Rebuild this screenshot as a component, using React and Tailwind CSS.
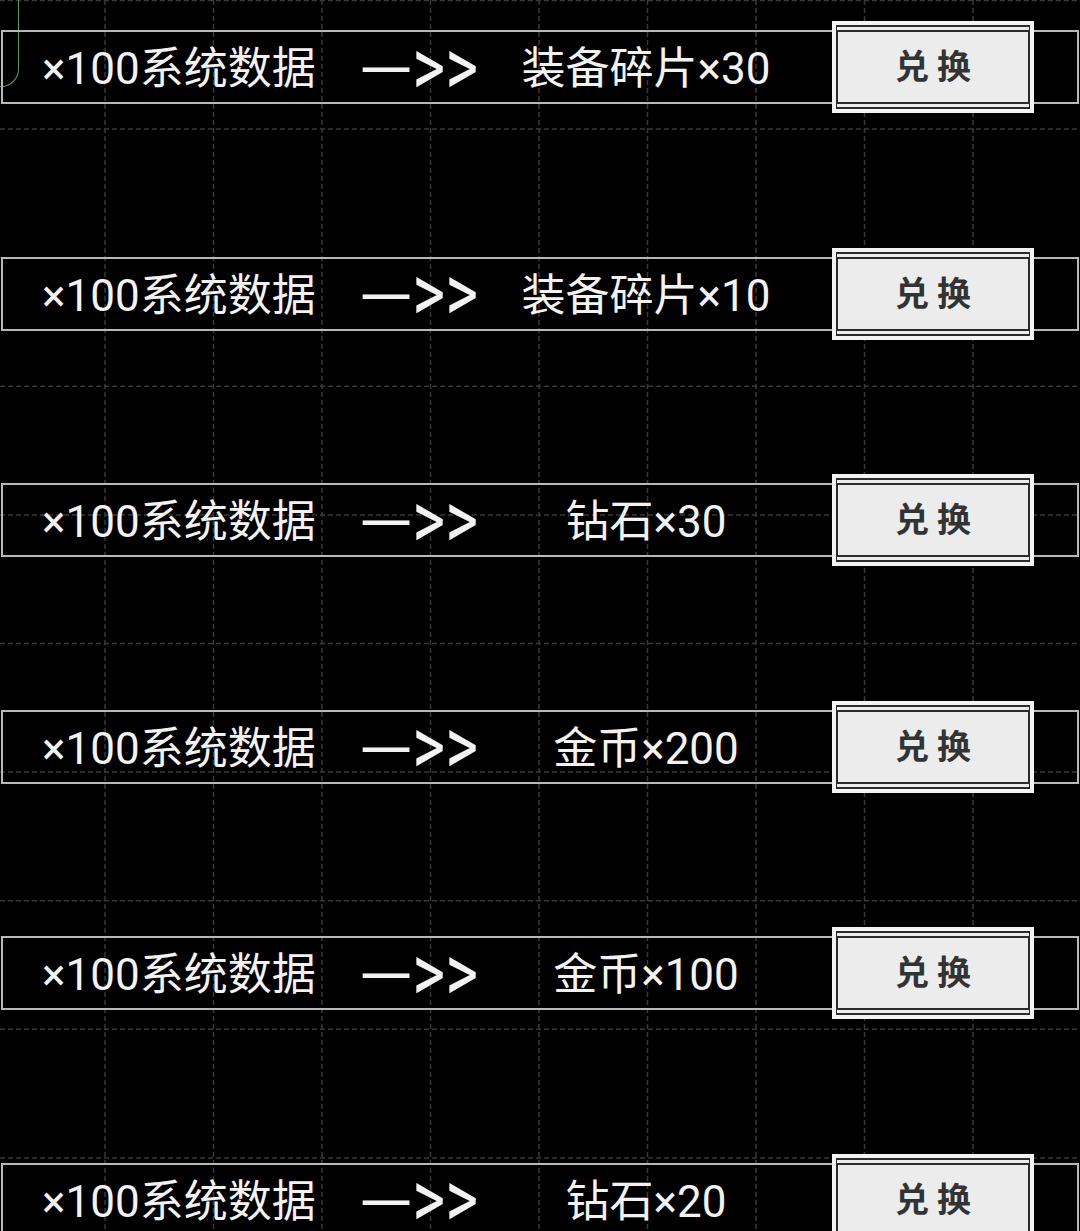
import React from "react";

const trades = [
  { cost: "×100系统数据", reward: "装备碎片×30" },
  { cost: "×100系统数据", reward: "装备碎片×10" },
  { cost: "×100系统数据", reward: "钻石×30" },
  { cost: "×100系统数据", reward: "金币×200" },
  { cost: "×100系统数据", reward: "金币×100" },
  { cost: "×100系统数据", reward: "钻石×20" },
];

const FONT = { fontFamily: 'Roboto, "Noto Sans CJK SC", sans-serif' };
const CJK = { fontFamily: '"Noto Sans CJK SC", sans-serif' };

// dashed backdrop grid
const GridBackdrop = () => {
  const cols = Array.from({ length: 10 }, (_, i) => -3.5 + 108.5 * (i + 1));
  const rows = Array.from({ length: 10 }, (_, i) => 128.6 * i + 0.5);
  return (
    <svg className="absolute inset-0 pointer-events-none" width="1080" height="1231">
      {cols.map((x) => (
        <line key={"c" + x} x1={x} y1="0" x2={x} y2="1231" stroke="#383838" strokeWidth="1.5" strokeDasharray="5 3" />
      ))}
      {rows.map((y) => (
        <line key={"r" + y} x1="0" y1={y} x2="1080" y2={y} stroke="#383838" strokeWidth="1.5" strokeDasharray="5 3" />
      ))}
    </svg>
  );
};

const ExchangeButton = () => (
  <button className="w-[202px] h-[92px] shrink-0 bg-[#f3f3f3] p-[4px] cursor-pointer">
    <div className="w-full h-full bg-[#ececec] border-x-2 border-y-[7px] border-double border-[#2b2b2b] flex items-center justify-center gap-[8px] text-[34px] font-bold text-[#333] leading-none">
      <span>兑</span>
      <span>换</span>
    </div>
  </button>
);

const TradeRow = ({ cost, reward }) => (
  <div className="ml-px w-[1078px] h-[74px] border-2 border-[#b8b8b8] flex items-center pl-[39px] text-[#f2f2f2] leading-none">
    <span className="w-[318px] text-[44px] pt-[4px]">{cost}</span>
    <span className="w-[140px] h-[50px] flex items-center">
      <span className="text-[58px] font-medium mb-[12px]" style={CJK}>—</span>
      <span className="text-[63px] tracking-[0px] scale-y-[1.3]">&gt;&gt;</span>
    </span>
    <span className="w-[292px] text-center text-[44px] pt-[4px]">{reward}</span>
    <div className="ml-[40px]">
      <ExchangeButton />
    </div>
  </div>
);

export default function App() {
  return (
    <div className="relative w-[1080px] h-[1231px] bg-black overflow-hidden" style={FONT}>
      <GridBackdrop />

      {/* stray focus outline in the corner */}
      <div className="absolute left-0 top-0 w-[19px] h-[87px] border-r border-b border-[#5b9a68] rounded-br-[18px]" />

      <div className="relative flex flex-col gap-[152.5px] pt-[30px]">
        {trades.map((t, i) => (
          <TradeRow key={i} cost={t.cost} reward={t.reward} />
        ))}
      </div>
    </div>
  );
}
